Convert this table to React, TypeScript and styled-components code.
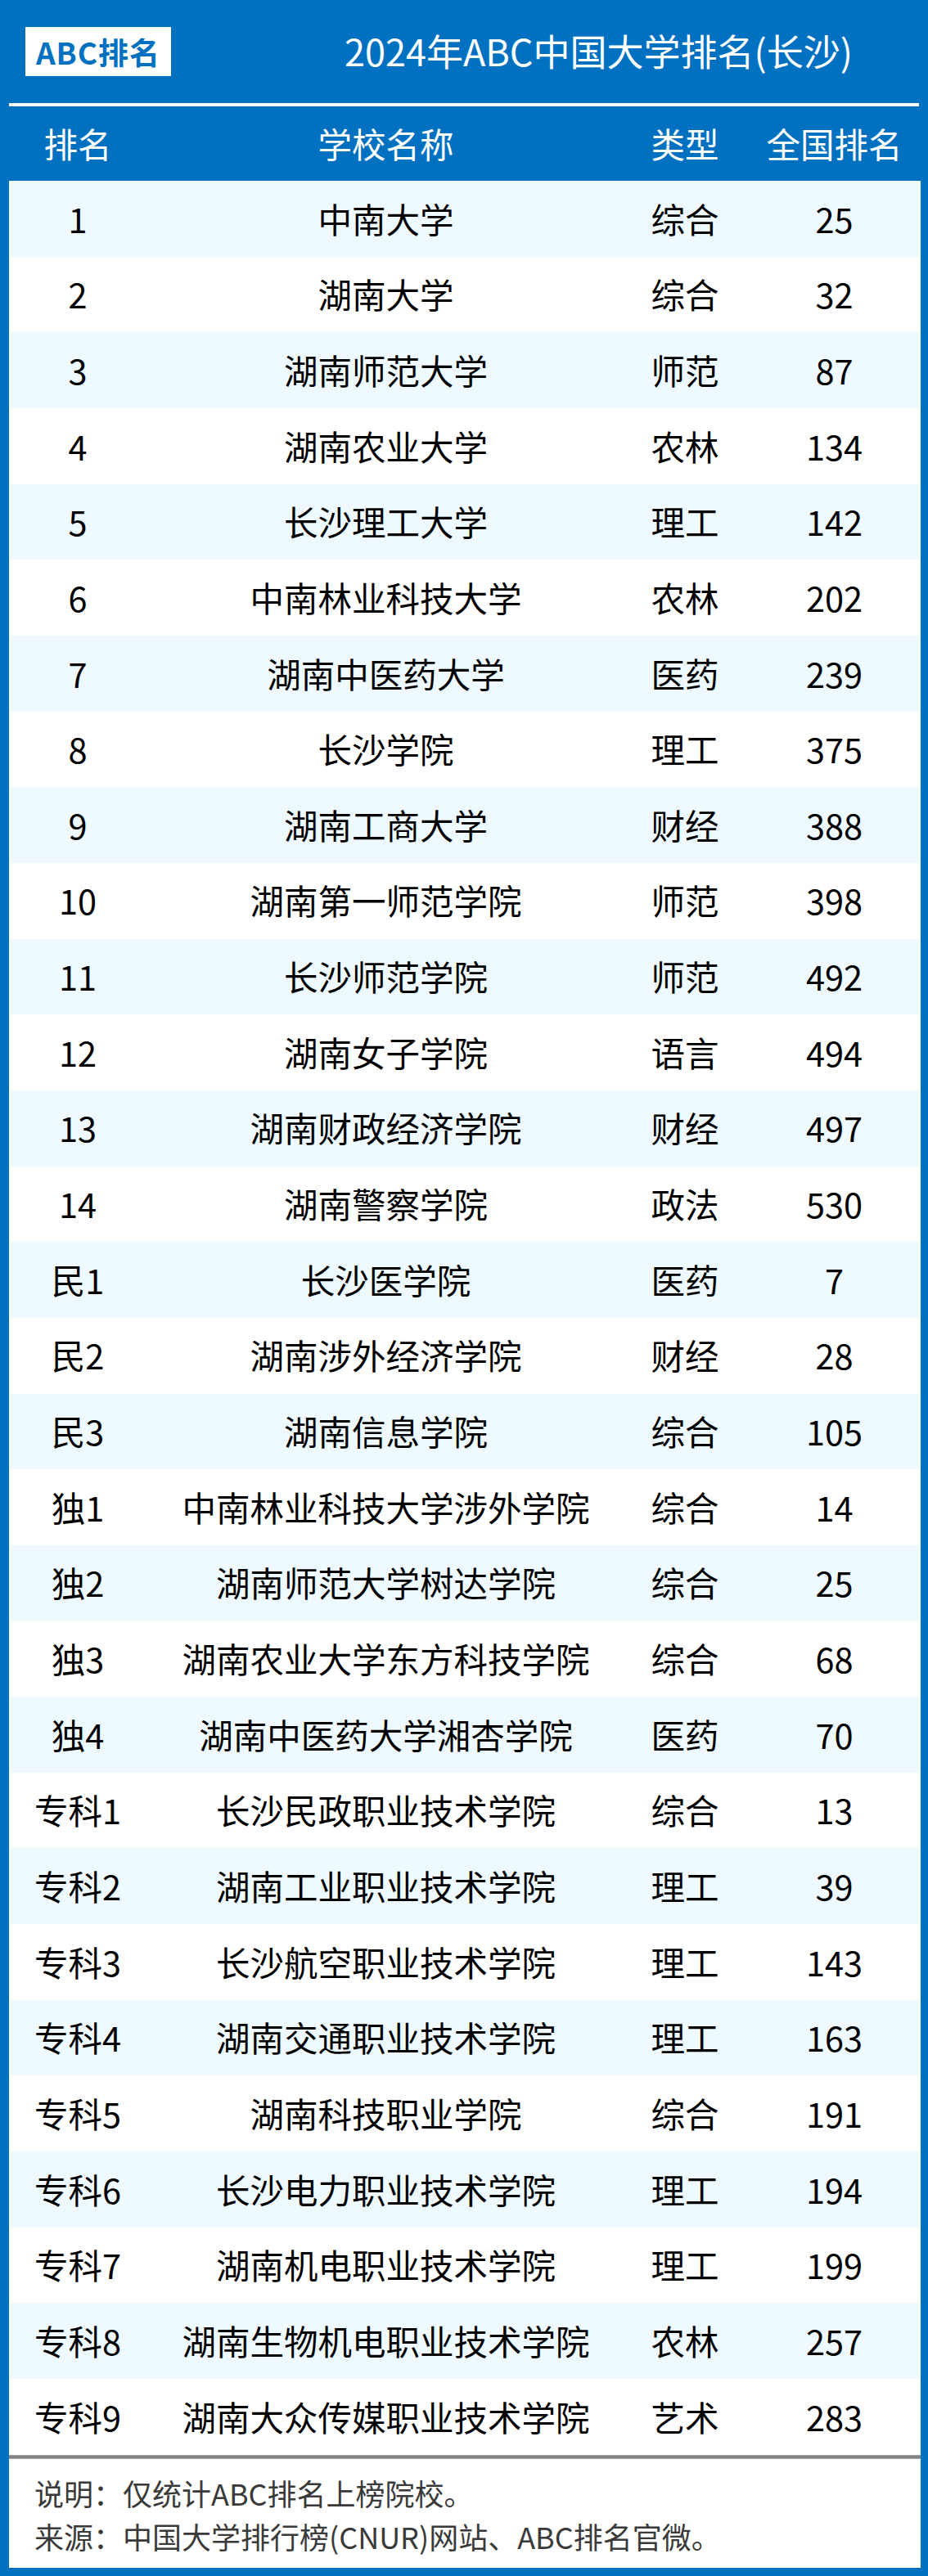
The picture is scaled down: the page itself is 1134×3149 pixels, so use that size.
import React from "react";
import styled, { createGlobalStyle } from "styled-components";

const GlobalStyle = createGlobalStyle`
  * { box-sizing: border-box; }
  html, body { margin: 0; padding: 0; background: #0070C0; }
  body { font-family: "Noto Sans CJK SC", "Noto Sans", sans-serif; }
`;

const Frame = styled.div`
  width: 1134px;
  height: 3149px;
  background: #0070c0;
  padding: 0 9px 10px 11px;
  display: flex;
  flex-direction: column;
`;

const TopBar = styled.div`
  height: 126px;
  display: flex;
  align-items: center;
  padding-left: 20px;
`;

const Logo = styled.div`
  width: 178px;
  height: 60px;
  background: #ffffff;
  color: #0070c0;
  font-weight: 700;
  font-size: 37px;
  letter-spacing: 1px;
  display: flex;
  align-items: center;
  justify-content: center;
  line-height: 1;
`;

const Title = styled.div`
  margin-left: 212px;
  color: #ffffff;
  font-size: 45px;
  line-height: 1;
  padding-bottom: 4px;
  white-space: nowrap;
`;

const Divider = styled.div`
  height: 4px;
  background: #ffffff;
  margin-right: 2px;
`;

const Grid = styled.div<{ $bg: string; $color: string; $h: number }>`
  display: grid;
  grid-template-columns: 168px 585px 146px 1fr;
  height: ${(p) => p.$h}px;
  background: ${(p) => p.$bg};
  color: ${(p) => p.$color};
  font-size: 41.5px;
  line-height: 1;
  align-items: center;
  flex: none;
`;

const Cell = styled.div<{ $shift?: number }>`
  text-align: center;
  white-space: nowrap;
  padding-left: ${(p) => p.$shift ?? 0}px;
`;

const Rule = styled.div`
  height: 5px;
  background: linear-gradient(#a8a8a8, #767676 50%, #a8a8a8);
  flex: none;
`;

const Notes = styled.div`
  flex: 1;
  background: #ffffff;
  padding: 15px 0 0 31px;
  color: #3a3a3a;
  font-size: 36px;
  line-height: 53px;
`;

const rows: [string, string, string, string][] = [
  ["1", "中南大学", "综合", "25"],
  ["2", "湖南大学", "综合", "32"],
  ["3", "湖南师范大学", "师范", "87"],
  ["4", "湖南农业大学", "农林", "134"],
  ["5", "长沙理工大学", "理工", "142"],
  ["6", "中南林业科技大学", "农林", "202"],
  ["7", "湖南中医药大学", "医药", "239"],
  ["8", "长沙学院", "理工", "375"],
  ["9", "湖南工商大学", "财经", "388"],
  ["10", "湖南第一师范学院", "师范", "398"],
  ["11", "长沙师范学院", "师范", "492"],
  ["12", "湖南女子学院", "语言", "494"],
  ["13", "湖南财政经济学院", "财经", "497"],
  ["14", "湖南警察学院", "政法", "530"],
  ["民1", "长沙医学院", "医药", "7"],
  ["民2", "湖南涉外经济学院", "财经", "28"],
  ["民3", "湖南信息学院", "综合", "105"],
  ["独1", "中南林业科技大学涉外学院", "综合", "14"],
  ["独2", "湖南师范大学树达学院", "综合", "25"],
  ["独3", "湖南农业大学东方科技学院", "综合", "68"],
  ["独4", "湖南中医药大学湘杏学院", "医药", "70"],
  ["专科1", "长沙民政职业技术学院", "综合", "13"],
  ["专科2", "湖南工业职业技术学院", "理工", "39"],
  ["专科3", "长沙航空职业技术学院", "理工", "143"],
  ["专科4", "湖南交通职业技术学院", "理工", "163"],
  ["专科5", "湖南科技职业学院", "综合", "191"],
  ["专科6", "长沙电力职业技术学院", "理工", "194"],
  ["专科7", "湖南机电职业技术学院", "理工", "199"],
  ["专科8", "湖南生物机电职业技术学院", "农林", "257"],
  ["专科9", "湖南大众传媒职业技术学院", "艺术", "283"],
];

const ROW_H = 2780 / 30;

export default function App() {
  return (
    <>
      <GlobalStyle />
      <Frame>
        <TopBar>
          <Logo>ABC排名</Logo>
          <Title>2024年ABC中国大学排名(长沙)</Title>
        </TopBar>
        <Divider />
        <Grid $bg="#0070c0" $color="#ffffff" $h={91}>
          <Cell>排名</Cell>
          <Cell>学校名称</Cell>
          <Cell>类型</Cell>
          <Cell $shift={4}>全国排名</Cell>
        </Grid>
        {rows.map((r, i) => (
          <Grid
            key={i}
            $bg={i % 2 === 0 ? "#eefaff" : "#ffffff"}
            $color="#000000"
            $h={ROW_H}
          >
            <Cell>{r[0]}</Cell>
            <Cell>{r[1]}</Cell>
            <Cell>{r[2]}</Cell>
            <Cell $shift={4}>{r[3]}</Cell>
          </Grid>
        ))}
        <Rule />
        <Notes>
          <div>说明：仅统计ABC排名上榜院校。</div>
          <div>来源：中国大学排行榜(CNUR)网站、ABC排名官微。</div>
        </Notes>
      </Frame>
    </>
  );
}
